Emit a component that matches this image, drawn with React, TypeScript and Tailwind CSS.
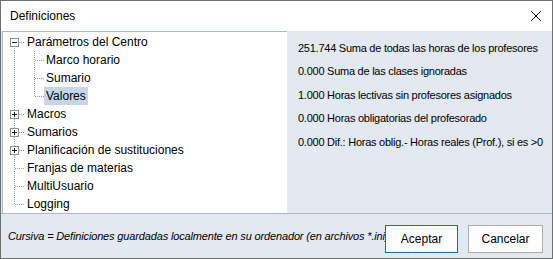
const tree = [
  { label: "Parámetros del Centro", level: 0, box: "minus", first: true },
  { label: "Marco horario", level: 1 },
  { label: "Sumario", level: 1 },
  { label: "Valores", level: 1, lastChild: true, selected: true },
  { label: "Macros", level: 0, box: "plus" },
  { label: "Sumarios", level: 0, box: "plus" },
  { label: "Planificación de sustituciones", level: 0, box: "plus" },
  { label: "Franjas de materias", level: 0 },
  { label: "MultiUsuario", level: 0 },
  { label: "Logging", level: 0, last: true },
];

const valores = [
  "251.744 Suma de todas las horas de los profesores",
  "0.000 Suma de las clases ignoradas",
  "1.000 Horas lectivas sin profesores asignados",
  "0.000 Horas obligatorias del profesorado",
  "0.000 Dif.: Horas oblig.- Horas reales (Prof.), si es >0",
];

type Row = (typeof tree)[number] & {
  box?: string;
  first?: boolean;
  last?: boolean;
  lastChild?: boolean;
  selected?: boolean;
};

function Gutter({ row }: { row: Row }) {
  const dot = { stroke: "#a0a0a0", strokeWidth: 1, strokeDasharray: "1 1" };
  if (row.level === 1) {
    return (
      <svg width="41" height="18" className="shrink-0" shapeRendering="crispEdges">
        <line x1="11.5" y1="0" x2="11.5" y2="18" {...dot} />
        <line x1="31.5" y1="0" x2="31.5" y2={row.lastChild ? 10 : 18} {...dot} />
        <line x1="32" y1="9.5" x2="41" y2="9.5" {...dot} />
      </svg>
    );
  }
  return (
    <svg width="22" height="18" className="shrink-0" shapeRendering="crispEdges">
      <line x1="11.5" y1={row.first ? 9 : 0} x2="11.5" y2={row.last ? 10 : 18} {...dot} />
      <line x1="12" y1="9.5" x2="22" y2="9.5" {...dot} />
      {row.box && (
        <>
          <rect x="7.5" y="5.5" width="8" height="8" fill="#fff" stroke="#919191" />
          <line x1="9" y1="9.5" x2="14" y2="9.5" stroke="#1c1c1c" />
          {row.box === "plus" && <line x1="11.5" y1="7" x2="11.5" y2="12" stroke="#1c1c1c" />}
        </>
      )}
    </svg>
  );
}

export default function App() {
  return (
    <div className="w-[553px] h-[259px] border border-[#6f6f6f] bg-[#e3e9f1] flex flex-col text-black [font-family:'Liberation_Sans',Arial,sans-serif]">
      {/* Title bar */}
      <div className="h-[30px] bg-white flex items-center justify-between pl-[9px] pr-[9px] shrink-0">
        <span className="text-[12px]">Definiciones</span>
        <svg width="12" height="12" viewBox="0 0 12 12" className="mr-[1px]">
          <path d="M1 1 L11 11 M11 1 L1 11" stroke="#111" strokeWidth="1" />
        </svg>
      </div>

      {/* Main area */}
      <div className="flex h-[182px] shrink-0">
        <div className="w-[285px] shrink-0 ml-px bg-white border-t border-l border-[#a9b8ce] pt-px overflow-hidden">
          {tree.map((row: Row, i) => (
            <div key={i} className="flex items-center h-[18px]">
              <Gutter row={row} />
              <span
                className={`text-[12px] leading-[18px] h-[18px] px-[2px] whitespace-nowrap ${row.selected ? "bg-[#c4d5ed]" : ""}`}
              >
                {row.label}
              </span>
            </div>
          ))}
        </div>
        <div className="flex-1 min-w-0 overflow-hidden pl-[11px] pt-[5px] text-[11px] tracking-[-0.25px]">
          {valores.map((v, i) => (
            <div key={i} className="h-[23.5px] flex items-center whitespace-nowrap">
              {v}
            </div>
          ))}
        </div>
      </div>

      <div className="h-px bg-[#a9b8d0] shrink-0" />

      {/* Bottom bar */}
      <div className="flex-1 flex items-start pt-[11px] pl-[7px] pr-[9px] text-[11px]">
        <div className="flex-1 min-w-0 overflow-hidden whitespace-nowrap italic mt-[4px] leading-[14px] tracking-[-0.15px]">
          Cursiva = Definiciones guardadas localmente en su ordenador (en archivos *.ini)
        </div>
        <button className="w-[73px] h-[28px] bg-[#fdfdfd] border border-[#2b63b3] text-[12px]">Aceptar</button>
        <button className="w-[75px] h-[28px] ml-[10px] bg-[#fdfdfd] border border-[#adadad] text-[12px]">Cancelar</button>
      </div>
    </div>
  );
}
